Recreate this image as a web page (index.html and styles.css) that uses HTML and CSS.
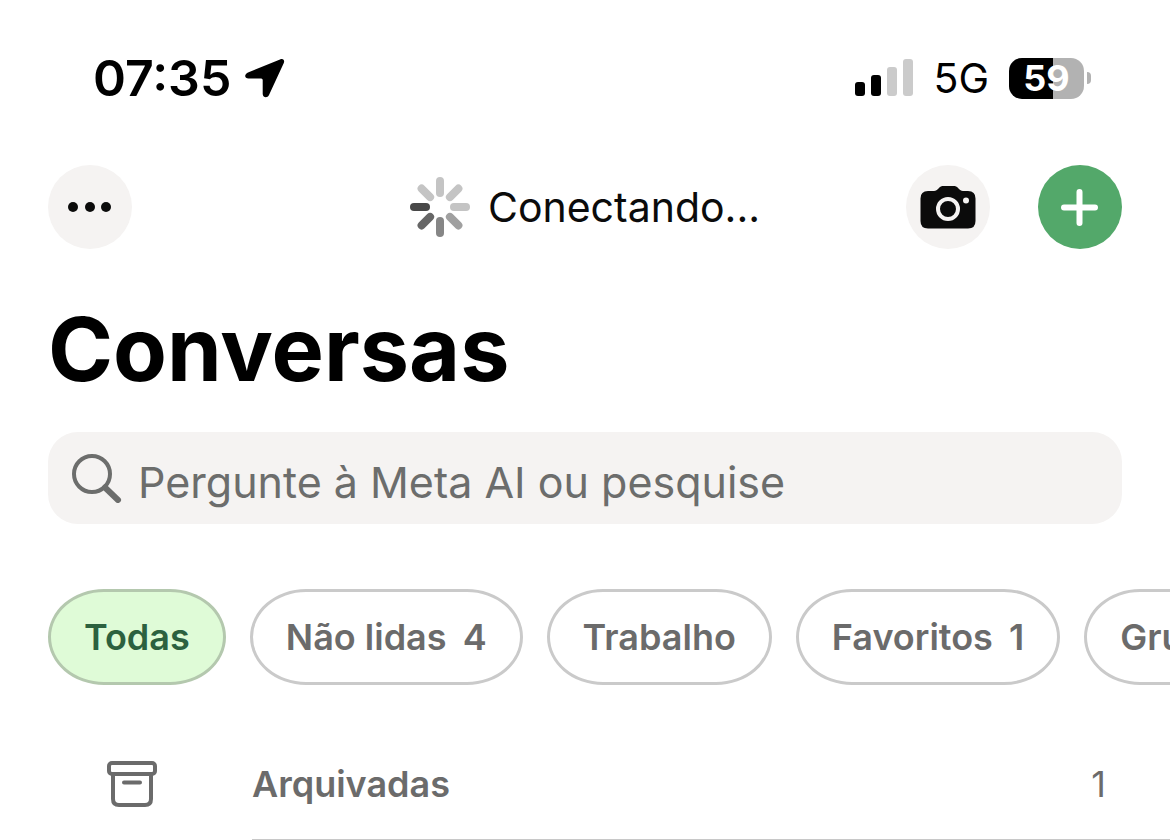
FILE: index.html
```
<!DOCTYPE html>
<html lang="pt-BR">
<head>
    <meta charset="UTF-8">
    <meta name="viewport" content="width=device-width, initial-scale=1.0">
    <title>Conversas</title>
    <link rel="stylesheet" href="styles.css">
</head>
<body>
    <div class="status-bar">
        <div class="status-left">
            <span class="time">07:35</span>
            <svg class="location" viewBox="0 0 40 40"><path d="M35 1.500 3 14.500C-1 16.500-.6 20.500 3.500 20.500H16.200Q17.700 20.500 17.700 22V36C18 40 22.500 40.300 24 37L38.800 5C40 2 38 0 35 1.500z"></path></svg>
        </div>
        <div class="status-right">
            <svg class="signal" viewBox="0 0 58 38">
                <rect x="0" y="23" width="10" height="14" rx="3"></rect>
                <rect x="16" y="16" width="10" height="21" rx="3"></rect>
                <rect class="off" x="32" y="8" width="10" height="29" rx="3"></rect>
                <rect class="off" x="48" y="0" width="10" height="37" rx="3"></rect>
            </svg>
            <span class="network">5G</span>
            <div class="battery">
                <span class="battery-level">59</span>
                <span class="battery-tip"></span>
            </div>
        </div>
    </div>

    <header class="header">
        <button type="button" class="round-button" aria-label="Mais">
            <svg viewBox="0 0 84 84"><circle cx="25" cy="42" r="5"></circle><circle cx="42" cy="42" r="5"></circle><circle cx="58" cy="42" r="5"></circle></svg>
        </button>
        <div class="connecting">
            <svg class="spinner" viewBox="0 0 60 60">
                <path stroke="#c4c4c4" d="M30 4v12"></path>
                <path stroke="#c4c4c4" d="M48.400 11.600 39.900 20.100"></path>
                <path stroke="#c4c4c4" d="M56 30H44"></path>
                <path stroke="#a0a0a0" d="M48.400 48.400 39.900 39.900"></path>
                <path stroke="#868686" d="M30 56V44"></path>
                <path stroke="#666" d="M11.600 48.400 20.100 39.900"></path>
                <path stroke="#484848" d="M4 30h12"></path>
                <path stroke="#c4c4c4" d="M11.600 11.600 20.100 20.100"></path>
            </svg>
            <span>Conectando...</span>
        </div>
        <div class="header-actions">
            <button type="button" class="round-button" aria-label="Câmera">
                <svg viewBox="0 0 84 84">
                    <path d="M22 26h6c2 0 3-1 4.500-2.500C34 21.500 35.500 21 38 21h9c2.500 0 4 .5 5.500 2.500C54 25 55 26 57 26h5q7.500 0 7.500 7.500V56q0 7.500-7.500 7.500H22q-7.500 0-7.500-7.500V33.500Q14.500 26 22 26z"></path>
                    <circle class="lens" cx="42" cy="44" r="10"></circle>
                    <circle class="flash" cx="60" cy="35.500" r="3"></circle>
                </svg>
            </button>
            <button type="button" class="round-button new-chat" aria-label="Nova conversa">
                <svg viewBox="0 0 84 84"><path d="M41.500 27v31M26 42.500h31"></path></svg>
            </button>
        </div>
    </header>

    <main>
        <h1>Conversas</h1>

        <label class="search">
            <svg viewBox="0 0 50 50"><circle cx="20" cy="21" r="18"></circle><path class="handle" d="M33 34.500 46 47"></path></svg>
            <input type="text" placeholder="Pergunte à Meta AI ou pesquise" aria-label="Pesquisar">
        </label>

        <div class="filters">
            <button type="button" class="filter active">Todas</button>
            <button type="button" class="filter">Não lidas <span class="count">4</span></button>
            <button type="button" class="filter">Trabalho</button>
            <button type="button" class="filter">Favoritos <span class="count">1</span></button>
            <button type="button" class="filter">Grupos</button>
        </div>

        <a href="#" class="archived">
            <svg viewBox="0 0 50 46"><rect x="2" y="2" width="46" height="11" rx="3"></rect><path d="M6 13v25q0 6 6 6h26q6 0 6-6V13M17 21.500h16"></path></svg>
            <span class="archived-row">
                <span class="archived-title">Arquivadas</span>
                <span class="archived-count">1</span>
            </span>
        </a>
    </main>
</body>
</html>
```

FILE: styles.css
```
* {
    box-sizing: border-box;
}

body {
    margin: 0;
    background: #fff;
    color: #000;
    font-family: 'Inter', sans-serif;
    overflow-x: hidden;
}

button {
    font-family: inherit;
    cursor: pointer;
}

.status-bar {
    display: flex;
    justify-content: space-between;
    align-items: center;
    height: 60px;
    margin-top: 48px;
    padding: 0 79px 0 93px;
}

.status-left,
.status-right {
    display: flex;
    align-items: center;
}

.status-left {
    gap: 14px;
}

.status-right {
    gap: 20px;
}

.time {
    font-size: 50px;
    font-weight: 600;
}

.location {
    width: 40px;
    height: 40px;
}

.signal {
    width: 58px;
    height: 38px;
}

.signal .off {
    fill: #cbcbcb;
}

.network {
    font-size: 41px;
}

.battery {
    display: flex;
    align-items: center;
    gap: 3px;
}

.battery-level {
    width: 75px;
    height: 41px;
    border-radius: 13px;
    background: linear-gradient(to right, #000 59%, #b2b2b2 59%);
    color: #fff;
    font-size: 36px;
    font-weight: 700;
    line-height: 41px;
    text-align: center;
}

.battery-tip {
    width: 4px;
    height: 12px;
    border-radius: 0 4px 4px 0;
    background: #b2b2b2;
}

.header {
    display: grid;
    grid-template-columns: 1fr auto 1fr;
    align-items: center;
    padding: 0 48px;
    margin-top: 57px;
}

.round-button {
    width: 84px;
    height: 84px;
    padding: 0;
    border: none;
    border-radius: 50%;
    background: #f5f3f2;
}

.round-button svg {
    display: block;
    width: 84px;
    height: 84px;
    fill: #0b0b0b;
}

.round-button .lens {
    fill: none;
    stroke: #f5f3f2;
    stroke-width: 4;
}

.round-button .flash {
    fill: #f5f3f2;
}

.new-chat {
    background: #53a86a;
}

.new-chat svg {
    stroke: #fff;
    stroke-width: 6;
    stroke-linecap: round;
}

.connecting {
    display: flex;
    align-items: center;
    gap: 18px;
    font-size: 41px;
    color: #0b0b0b;
}

.spinner {
    width: 60px;
    height: 60px;
    stroke-width: 8;
    stroke-linecap: round;
}

.header-actions {
    display: flex;
    justify-content: flex-end;
    gap: 48px;
}

h1 {
    margin: 48px 48px 0;
    font-size: 88px;
    line-height: 104px;
    font-weight: 700;
}

.search {
    display: flex;
    align-items: center;
    gap: 16px;
    height: 92px;
    margin: 31px 48px 0;
    padding: 0 24px;
    border-radius: 30px;
    background: #f5f3f2;
}

.search svg {
    flex: none;
    width: 50px;
    height: 50px;
    fill: none;
    stroke: #6c6d6c;
    stroke-width: 4;
    stroke-linecap: round;
}

.search .handle {
    stroke-width: 6;
}

.search input {
    flex: 1;
    min-width: 0;
    padding: 8px 0 0;
    border: none;
    outline: none;
    background: none;
    font-family: inherit;
    font-size: 43px;
    color: #0b0b0b;
}

.search input::placeholder {
    color: #6c6d6c;
    opacity: 1;
}

.filters {
    display: flex;
    gap: 24px;
    margin-top: 65px;
    padding-left: 48px;
    overflow: hidden;
}

.filter {
    flex: none;
    height: 96px;
    padding: 0 33px;
    border: 3px solid #cacaca;
    border-radius: 56px / 48px;
    background: #fff;
    color: #6b6b6b;
    font-size: 36px;
    font-weight: 600;
}

.filter.active {
    border-color: #b4c8ae;
    background: #dffbd7;
    color: #2c613f;
}

.count {
    margin-left: 7px;
}

.archived {
    display: flex;
    align-items: center;
    margin-top: 43px;
    color: #6b6b6b;
    text-decoration: none;
}

.archived svg {
    flex: none;
    width: 50px;
    height: 46px;
    margin: 0 95px 0 107px;
    fill: none;
    stroke: #6b6b6b;
    stroke-width: 4;
    stroke-linecap: round;
}

.archived-row {
    display: flex;
    flex: 1;
    align-items: center;
    justify-content: space-between;
    height: 112px;
    padding-right: 64px;
    border-bottom: 1px solid #c8c8c8;
    font-size: 36px;
}

.archived-title {
    font-weight: 600;
}
```
